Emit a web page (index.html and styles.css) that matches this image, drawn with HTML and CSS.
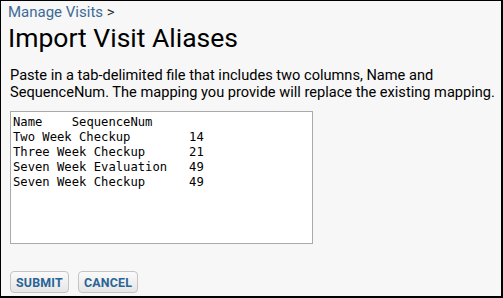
FILE: index.html
```html
<!DOCTYPE html>
<html>
<head>
<meta charset="utf-8">
<link rel="stylesheet" href="styles.css">
</head>
<body>
<div class="frame">
  <div class="crumb"><a href="#">Manage Visits</a> &gt;</div>
  <h1 class="title">Import Visit Aliases</h1>
  <p class="desc">Paste in a tab-delimited file that includes two columns, Name and SequenceNum. The mapping you provide will replace the existing mapping.</p>
  <textarea class="data">Name	SequenceNum
Two Week Checkup	14
Three Week Checkup	21
Seven Week Evaluation	49
Seven Week Checkup	49</textarea>
  <div class="actions">
    <button class="btn">SUBMIT</button>
    <button class="btn">CANCEL</button>
  </div>
</div>
</body>
</html>
```
FILE: styles.css
```css
html, body {
  margin: 0;
  padding: 0;
}
body {
  width: 503px;
  height: 298px;
  overflow: hidden;
}
.frame {
  box-sizing: border-box;
  width: 503px;
  height: 298px;
  background: #f7f7f7;
  border-top: 1px solid #000;
  border-left: 1px solid #000;
  border-right: 2px solid #000;
  border-bottom: 2px solid #000;
  padding: 2px 0 0 7px;
  font-family: Roboto, "Liberation Sans", sans-serif;
  color: #000;
  display: flex;
  flex-direction: column;
  align-items: flex-start;
}
.frame > * {
  flex-shrink: 0;
}
.crumb {
  font-size: 15px;
  line-height: 18px;
  color: #333;
}
.crumb a {
  color: #3d6a96;
  text-decoration: none;
}
.title {
  margin: 2px 0 0 0;
  font-size: 26.5px;
  font-weight: 400;
  line-height: 30px;
}
.desc {
  margin: 14px 0 0 2px;
  font-size: 14.6px;
  line-height: 17px;
  width: 492px;
}
.data {
  margin: 10px 0 0 2px;
  box-sizing: border-box;
  width: 303px;
  height: 133px;
  border: 1px solid #aaa;
  background: #fff;
  padding: 3px 2px;
  font-family: "DejaVu Sans Mono", monospace;
  font-size: 12.2px;
  line-height: 15px;
  tab-size: 8;
  resize: none;
  outline: none;
  color: #000;
}
.actions {
  margin: 27px 0 0 2px;
  display: flex;
  gap: 9px;
}
.btn {
  height: 22px;
  padding: 0 5px;
  border: 1px solid #c4c4c4;
  border-radius: 4px;
  background: linear-gradient(#fafafa, #e6e6e6);
  color: #2a6496;
  font-family: Roboto, "Liberation Sans", sans-serif;
  font-weight: 700;
  font-size: 12.4px;
  letter-spacing: 0.2px;
}
```
